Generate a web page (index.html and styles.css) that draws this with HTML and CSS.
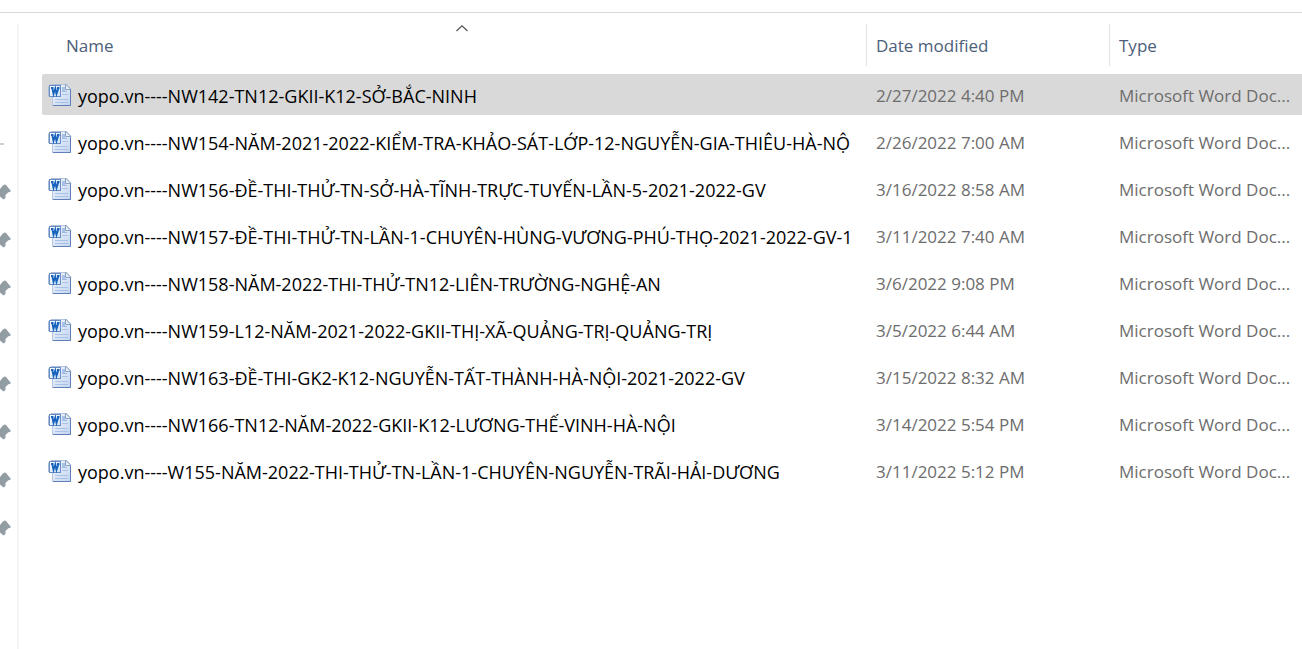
FILE: index.html
```html
<!DOCTYPE html>
<html lang="vi">
<head>
<meta charset="utf-8">
<title>yopo.vn</title>
<link rel="stylesheet" href="styles.css">
</head>
<body>
<svg class="sprite" aria-hidden="true">
  <defs>
    <linearGradient id="page" x1="0" y1="0" x2="1" y2="1"><stop offset="0" stop-color="#f4f8fd"/><stop offset="1" stop-color="#c3d4f0"/></linearGradient>
    <linearGradient id="tile" x1="0" y1="0" x2="1" y2="1"><stop offset="0" stop-color="#ffffff"/><stop offset="1" stop-color="#cfe2f7"/></linearGradient>
  </defs>
  <symbol id="doc" viewBox="0 0 24 24">
    <path d="M4.500 1.500H18.500L22.500 5.500V22.500H4.500Z" fill="url(#page)" stroke="#b4c6e0"/>
    <path d="M5 22.500H22.500V6" fill="none" stroke="#5f7fb8"/>
    <path d="M17.500 1V6.500H23Z" fill="#e8eff8" stroke="#8ba1c0"/>
    <path d="M14 11.500H20M7 16.500H20M7 19.500H20" stroke="#a9c2e8" fill="none"/>
    <rect x="14" y="4" width="3" height="5" fill="#a9c2e8"/>
    <path d="M14 8.500H19" stroke="#9db8e2"/>
    <path d="M0.500 13V4L3 1.500H13" fill="none" stroke="#a9bdd9"/>
    <rect x="1.500" y="2.500" width="11" height="11" fill="url(#tile)" stroke="#6a8cc4"/>
    <path d="M3 5H5.500M4.300 5L5.500 11L7.300 5.500L8.500 11L10.500 5M9 5H11.500" fill="none" stroke="#1763bd" stroke-width="1.800"/>
  </symbol>
  <symbol id="pin" viewBox="0 0 11 16">
    <path d="M0 5L3.300 1L5.500 0.600L10.600 6.600V7.500L8 8.600L5.500 11V14L3.500 15.400L0 12.600Z" fill="#929da3"/>
  </symbol>
</svg>
<div class="explorer">
  <nav class="sidebar" aria-label="Quick access">
    <span class="dash"></span>
    <svg class="pin"><use href="#pin"/></svg>
    <svg class="pin"><use href="#pin"/></svg>
    <svg class="pin"><use href="#pin"/></svg>
    <svg class="pin"><use href="#pin"/></svg>
    <svg class="pin"><use href="#pin"/></svg>
    <svg class="pin"><use href="#pin"/></svg>
    <svg class="pin"><use href="#pin"/></svg>
    <svg class="pin"><use href="#pin"/></svg>
  </nav>
  <main class="content">
    <table class="files">
      <colgroup><col><col class="col-date"><col class="col-type"></colgroup>
      <thead>
        <tr>
          <th class="head-name" aria-sort="ascending"><button class="sort sort-name" type="button"><svg class="caret" viewBox="0 0 12 7" aria-hidden="true"><path d="M0.500 6L6 0.800L11.500 6" fill="none" stroke="#555" stroke-width="1.200"/></svg>Name</button></th>
          <th><button class="sort" type="button">Date modified</button></th>
          <th><button class="sort" type="button">Type</button></th>
        </tr>
      </thead>
      <tbody>
        <tr class="selected"><td class="name"><div class="file"><svg class="doc"><use href="#doc"/></svg><span>yopo.vn----NW142-TN12-GKII-K12-SỞ-BẮC-NINH</span></div></td><td>2/27/2022 4:40 PM</td><td>Microsoft Word Doc...</td></tr>
        <tr><td class="name"><div class="file"><svg class="doc"><use href="#doc"/></svg><span>yopo.vn----NW154-NĂM-2021-2022-KIỂM-TRA-KHẢO-SÁT-LỚP-12-NGUYỄN-GIA-THIÊU-HÀ-NỘ</span></div></td><td>2/26/2022 7:00 AM</td><td>Microsoft Word Doc...</td></tr>
        <tr><td class="name"><div class="file"><svg class="doc"><use href="#doc"/></svg><span>yopo.vn----NW156-ĐỀ-THI-THỬ-TN-SỞ-HÀ-TĨNH-TRỰC-TUYẾN-LẦN-5-2021-2022-GV</span></div></td><td>3/16/2022 8:58 AM</td><td>Microsoft Word Doc...</td></tr>
        <tr><td class="name"><div class="file"><svg class="doc"><use href="#doc"/></svg><span>yopo.vn----NW157-ĐỀ-THI-THỬ-TN-LẦN-1-CHUYÊN-HÙNG-VƯƠNG-PHÚ-THỌ-2021-2022-GV-1</span></div></td><td>3/11/2022 7:40 AM</td><td>Microsoft Word Doc...</td></tr>
        <tr><td class="name"><div class="file"><svg class="doc"><use href="#doc"/></svg><span>yopo.vn----NW158-NĂM-2022-THI-THỬ-TN12-LIÊN-TRƯỜNG-NGHỆ-AN</span></div></td><td>3/6/2022 9:08 PM</td><td>Microsoft Word Doc...</td></tr>
        <tr><td class="name"><div class="file"><svg class="doc"><use href="#doc"/></svg><span>yopo.vn----NW159-L12-NĂM-2021-2022-GKII-THỊ-XÃ-QUẢNG-TRỊ-QUẢNG-TRỊ</span></div></td><td>3/5/2022 6:44 AM</td><td>Microsoft Word Doc...</td></tr>
        <tr><td class="name"><div class="file"><svg class="doc"><use href="#doc"/></svg><span>yopo.vn----NW163-ĐỀ-THI-GK2-K12-NGUYỄN-TẤT-THÀNH-HÀ-NỘI-2021-2022-GV</span></div></td><td>3/15/2022 8:32 AM</td><td>Microsoft Word Doc...</td></tr>
        <tr><td class="name"><div class="file"><svg class="doc"><use href="#doc"/></svg><span>yopo.vn----NW166-TN12-NĂM-2022-GKII-K12-LƯƠNG-THẾ-VINH-HÀ-NỘI</span></div></td><td>3/14/2022 5:54 PM</td><td>Microsoft Word Doc...</td></tr>
        <tr><td class="name"><div class="file"><svg class="doc"><use href="#doc"/></svg><span>yopo.vn----W155-NĂM-2022-THI-THỬ-TN-LẦN-1-CHUYÊN-NGUYỄN-TRÃI-HẢI-DƯƠNG</span></div></td><td>3/11/2022 5:12 PM</td><td>Microsoft Word Doc...</td></tr>
      </tbody>
    </table>
  </main>
</div>
</body>
</html>
```
FILE: styles.css
```css
* {
  box-sizing: border-box;
}

body {
  margin: 0;
  background: #fff;
  color: #000;
  font: 17px/24px "Open Sans", "Noto Sans", sans-serif;
}

.sprite {
  position: absolute;
  width: 0;
  height: 0;
}

.explorer {
  display: flex;
  min-height: 100vh;
  padding-top: 12px;
}

.explorer::before {
  content: "";
  position: absolute;
  left: 0;
  right: 0;
  height: 1px;
  background: #d9d9d9;
}

.sidebar {
  display: flex;
  flex-direction: column;
  gap: 32px;
  flex: none;
  width: 19px;
  margin-top: 12px;
  padding-top: 119px;
  border-right: 2px solid #f5f5f5;
}

.dash {
  width: 4px;
  height: 2px;
  margin-bottom: 7px;
  background: #d0d0d0;
}

.pin {
  display: block;
  width: 11px;
  height: 16px;
}

.content {
  flex: 1;
  min-width: 0;
  padding: 6px 0 0 23px;
}

.files {
  width: 100%;
  table-layout: fixed;
  border-collapse: separate;
  border-spacing: 0 6px;
}

.col-date {
  width: 243px;
}

.col-type {
  width: 193px;
}

th {
  height: 44px;
  padding: 0;
  font-weight: 400;
  vertical-align: top;
}

.head-name {
  padding-left: 14px;
}

.sort {
  display: block;
  width: 100%;
  height: 42px;
  padding: 2px 9px 0;
  border: 0;
  border-left: 1px solid #e2e2e2;
  background: none;
  color: #4c607a;
  font: inherit;
  text-align: left;
}

.sort-name {
  position: relative;
  border-left-color: transparent;
}

.caret {
  position: absolute;
  top: 1px;
  left: calc(50% - 6px);
  width: 12px;
  height: 7px;
}

td {
  height: 41px;
  padding: 10px 0 0 10px;
  color: #6d6d6d;
  vertical-align: top;
  white-space: nowrap;
}

.name {
  padding: 9px 0 0 6px;
  color: #000;
  font-size: 18px;
}

.file {
  display: flex;
  gap: 6px;
}

.file span {
  padding-top: 1px;
}

.doc {
  flex: none;
  width: 24px;
  height: 24px;
}

.selected td {
  background: #d9d9d9;
}

.selected .name {
  border-radius: 2px 0 0 2px;
}
```
